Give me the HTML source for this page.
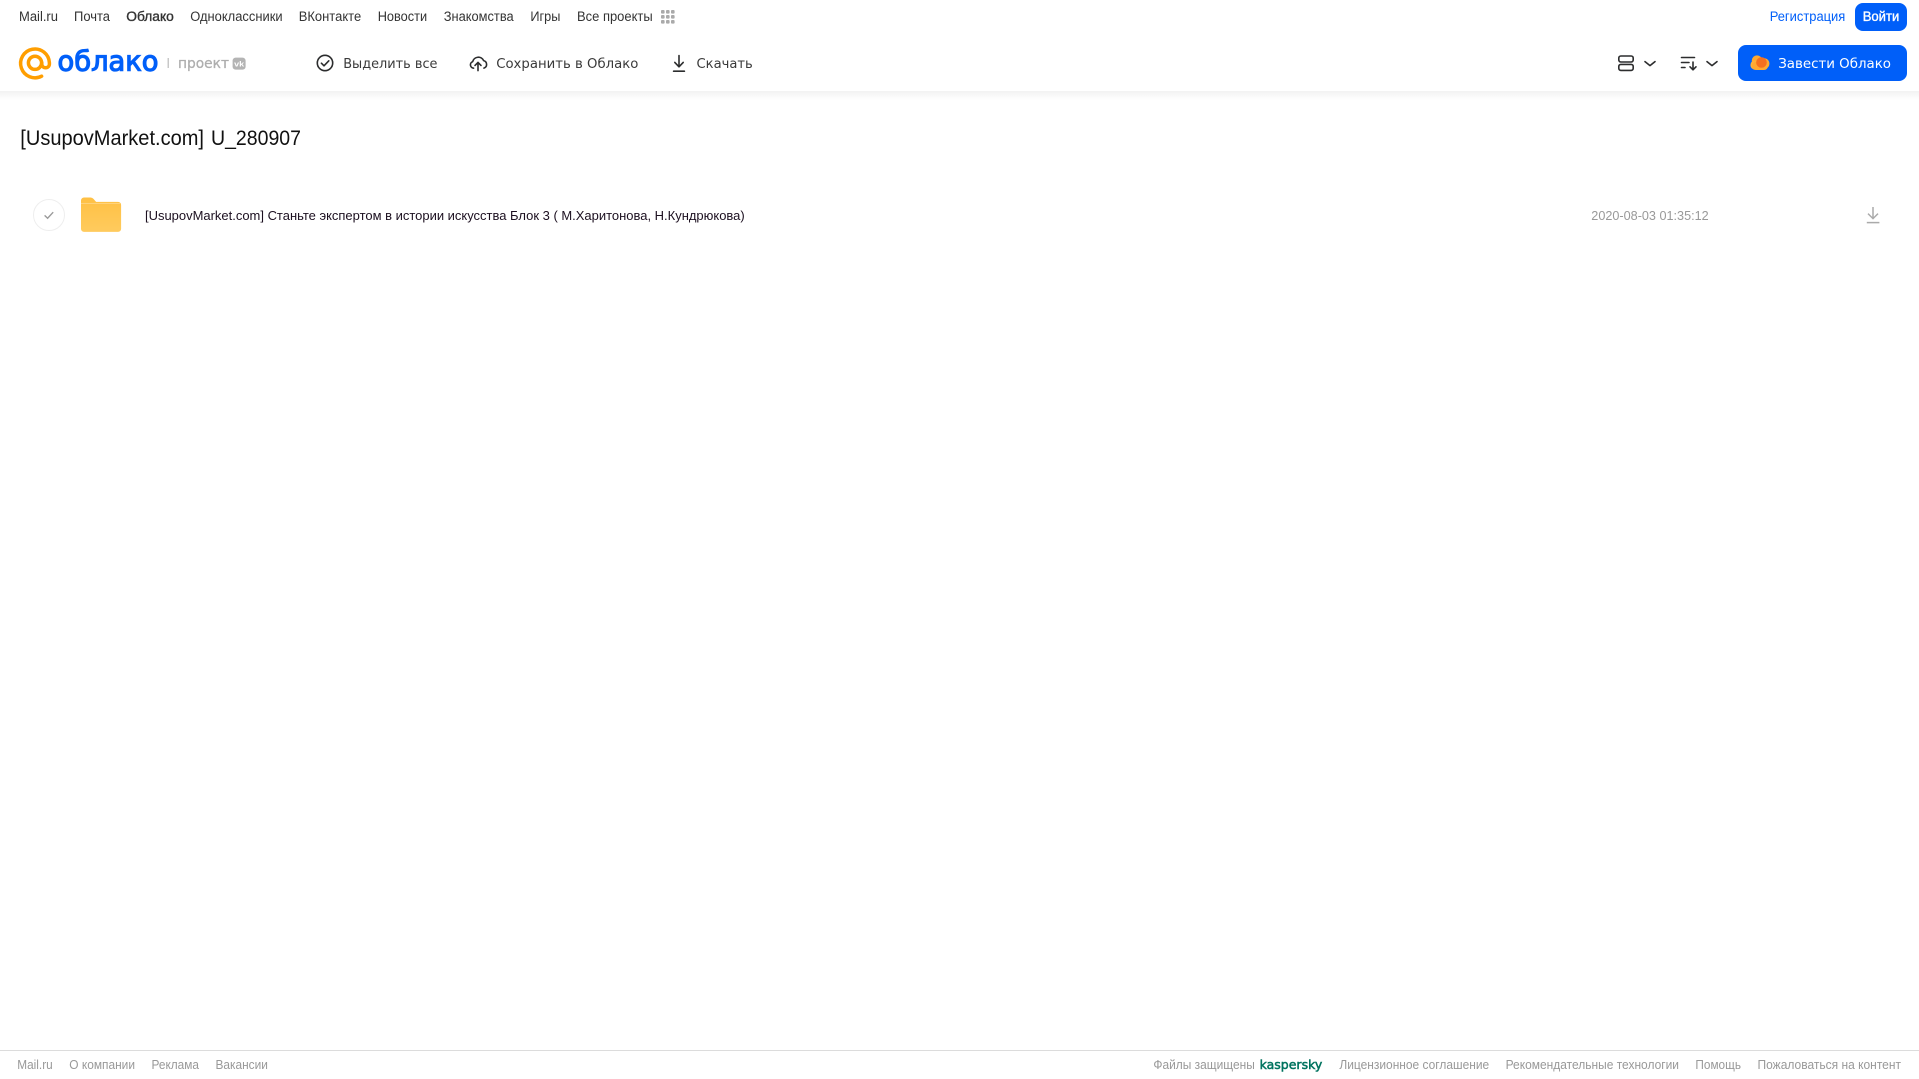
<!DOCTYPE html>
<html lang="ru"><head><meta charset="utf-8"><title>Облако</title>
<style>html,body{margin:0;padding:0;background:#fff;overflow:hidden}svg{display:block}text{font-family:"Liberation Sans",sans-serif;white-space:pre}.g{font-family:"DejaVu Sans",sans-serif}</style></head>
<body>
<svg xmlns="http://www.w3.org/2000/svg" width="1919" height="1079" viewBox="0 0 1919 1079">
<defs>
<linearGradient id="sh" x1="0" y1="0" x2="0" y2="1"><stop offset="0" stop-color="#f2f2f2"/><stop offset="1" stop-color="#fff"/></linearGradient>
<linearGradient id="fo" x1="0" y1="0" x2="0" y2="1"><stop offset="0" stop-color="#ffc043"/><stop offset="1" stop-color="#ffcb5e"/></linearGradient>
</defs>
<rect width="1919" height="1079" fill="#fff"/>
<rect y="91" width="1919" height="9" fill="url(#sh)"/>

<g font-size="13.5" fill="#333">
<text x="19" y="21" textLength="39" lengthAdjust="spacingAndGlyphs">Mail.ru</text>
<text x="74" y="21" textLength="36" lengthAdjust="spacingAndGlyphs">Почта</text>
<text x="126.3" y="21" textLength="47.5" lengthAdjust="spacingAndGlyphs" stroke="#333" stroke-width=".35">Облако</text>
<text x="190.2" y="21" textLength="92.4" lengthAdjust="spacingAndGlyphs">Одноклассники</text>
<text x="298.7" y="21" textLength="62.5" lengthAdjust="spacingAndGlyphs">ВКонтакте</text>
<text x="377.7" y="21" textLength="49.5" lengthAdjust="spacingAndGlyphs">Новости</text>
<text x="443.7" y="21" textLength="70" lengthAdjust="spacingAndGlyphs">Знакомства</text>
<text x="530.4" y="21" textLength="30" lengthAdjust="spacingAndGlyphs">Игры</text>
<text x="577" y="21" textLength="75.7" lengthAdjust="spacingAndGlyphs">Все проекты</text>
</g>
<g fill="#aaa">
<rect x="661" y="10" width="3.6" height="3.6" rx="1"/><rect x="666" y="10" width="3.6" height="3.6" rx="1"/><rect x="671" y="10" width="3.6" height="3.6" rx="1"/>
<rect x="661" y="15" width="3.6" height="3.6" rx="1"/><rect x="666" y="15" width="3.6" height="3.6" rx="1"/><rect x="671" y="15" width="3.6" height="3.6" rx="1"/>
<rect x="661" y="20" width="3.6" height="3.6" rx="1"/><rect x="666" y="20" width="3.6" height="3.6" rx="1"/><rect x="671" y="20" width="3.6" height="3.6" rx="1"/>
</g>

<text x="1769.7" y="21" font-size="13.5" fill="#005ff9" textLength="75.6" lengthAdjust="spacingAndGlyphs">Регистрация</text>
<rect x="1855" y="3" width="52" height="28" rx="8" fill="#005ff9"/>
<text x="1862.7" y="21" font-size="13.5" fill="#fff" stroke="#fff" stroke-width=".35" textLength="36.6" lengthAdjust="spacingAndGlyphs">Войти</text>

<!-- logo -->
<g fill="none" stroke="#ff9e00" stroke-width="3.5" stroke-linecap="round">
<path d="M41.6 76.2 A14.4 14.4 0 1 1 49.4 62.8 v1.2 a3.8 3.8 0 0 1 -7.6 0 V62.8"/>
<circle cx="35" cy="62.8" r="6.6"/>
</g>
<text class="g" x="57.5" y="70.6" font-size="28" font-weight="400" fill="#005ff9" stroke="#005ff9" stroke-width="1.2" textLength="101" lengthAdjust="spacingAndGlyphs">облако</text>
<rect x="167.6" y="58" width="1.2" height="10" fill="#bbb"/>
<text class="g" x="178" y="67.8" font-size="14.5" fill="#aeaeae" stroke="#aeaeae" stroke-width=".3" textLength="51" lengthAdjust="spacingAndGlyphs">проект</text>
<rect x="232.6" y="57.6" width="13" height="12" rx="3" fill="#b4b4b4"/>
<text x="234.2" y="66.6" font-size="7.5" font-weight="700" fill="#fff" textLength="10" lengthAdjust="spacingAndGlyphs">vk</text>

<!-- toolbar -->
<g class="g" font-size="13.5" fill="#3a3a3a">
<text class="g" x="343.2" y="67.8" textLength="94.3" lengthAdjust="spacingAndGlyphs">Выделить все</text>
<text class="g" x="496.2" y="67.8" textLength="142.2" lengthAdjust="spacingAndGlyphs">Сохранить в Облако</text>
<text class="g" x="696.5" y="67.8" textLength="56.3" lengthAdjust="spacingAndGlyphs">Скачать</text>
</g>
<g fill="none" stroke="#2c2d2e" stroke-width="1.6" stroke-linecap="round" stroke-linejoin="round">
<circle cx="325" cy="63" r="7.7"/>
<path d="M321.4 63.2l2.6 2.6 4.8-5"/>
<path d="M473.6 68.2a3.4 3.4 0 0 1-.9-6.6 5.8 5.8 0 0 1 10.9-1 3.9 3.9 0 0 1 .3 7.5"/>
<path d="M478 70.6v-8M475 65.4l3-3 3 3"/>
<path d="M679 55.5v11M674.8 62.4l4.2 4.4 4.2-4.4"/>
<path d="M673.6 71.2h10.8"/>
<rect x="1618.8" y="56" width="14.4" height="6" rx="2"/>
<rect x="1618.8" y="64.4" width="14.4" height="6" rx="2"/>
<path d="M1645 61.6l5 4 5-4"/>
<path d="M1681.5 57.5h13M1681.5 62.5h7.5M1681.5 67.5h3.5"/>
<path d="M1693 62v7.6M1690 66.8l3 3 3-3"/>
<path d="M1707 61.6l5 4 5-4"/>
</g>

<rect x="1738" y="45" width="169" height="36" rx="8" fill="#005ff9"/>
<circle cx="1757" cy="60.6" r="5.2" fill="#ffa930"/>
<circle cx="1755" cy="65" r="4.6" fill="#ffb03a"/>
<circle cx="1764" cy="63.6" r="5.4" fill="#ffa930"/>
<rect x="1752" y="62" width="16" height="8" rx="4" fill="#ffa930"/>
<circle cx="1761.5" cy="62.5" r="5.3" fill="#f5701f"/>
<text class="g" x="1778.2" y="67.8" font-size="13.5" fill="#fff" textLength="112.8" lengthAdjust="spacingAndGlyphs">Завести Облако</text>

<!-- title -->
<text x="20.3" y="145" font-size="21.5" fill="#111" textLength="183.7" lengthAdjust="spacingAndGlyphs">[UsupovMarket.com]</text>
<text x="211" y="145" font-size="21.5" fill="#111" textLength="90" lengthAdjust="spacingAndGlyphs">U_280907</text>

<!-- row -->
<circle cx="49" cy="215" r="15.5" fill="#fff" stroke="#eee" stroke-width="1"/>
<path d="M44.6 215.4l3 2.8 5.6-6" fill="none" stroke="#9a9a9a" stroke-width="1.4"/>
<path d="M81 200.5a3 3 0 0 1 3-3h6.5a4 4 0 0 1 3 1.4l2.6 3h22a3 3 0 0 1 3 3v24a3 3 0 0 1-3 3H84a3 3 0 0 1-3-3z" fill="url(#fo)"/>
<rect x="81" y="203" width="40" height="1" fill="#ffd27a"/>
<text x="145" y="220" font-size="13.2" fill="#1c1020" textLength="599.7" lengthAdjust="spacingAndGlyphs">[UsupovMarket.com] Станьте экспертом в истории искусства Блок 3 ( М.Харитонова, Н.Кундрюкова)</text>
<text x="1591.3" y="220" font-size="12.5" fill="#999" textLength="117.4" lengthAdjust="spacingAndGlyphs">2020-08-03 01:35:12</text>
<g fill="none" stroke="#aaa" stroke-width="1.5">
<path d="M1873 207v11.5M1868 213.6l5 5 5-5"/>
<path d="M1866.8 222.6h12.6"/>
</g>

<!-- footer -->
<rect y="1050" width="1919" height="1" fill="#dcdcdc"/>
<g font-size="12.6" fill="#999">
<text x="17.3" y="1069" textLength="35.4" lengthAdjust="spacingAndGlyphs">Mail.ru</text>
<text x="69.3" y="1069" textLength="65.7" lengthAdjust="spacingAndGlyphs">О компании</text>
<text x="151.5" y="1069" textLength="47.5" lengthAdjust="spacingAndGlyphs">Реклама</text>
<text x="215.5" y="1069" textLength="52.4" lengthAdjust="spacingAndGlyphs">Вакансии</text>
<text x="1153.4" y="1069" textLength="101.4" lengthAdjust="spacingAndGlyphs">Файлы защищены</text>
<text x="1339.4" y="1069" textLength="149.8" lengthAdjust="spacingAndGlyphs">Лицензионное соглашение</text>
<text x="1505.6" y="1069" textLength="173.4" lengthAdjust="spacingAndGlyphs">Рекомендательные технологии</text>
<text x="1695.4" y="1069" textLength="45.6" lengthAdjust="spacingAndGlyphs">Помощь</text>
<text x="1757.5" y="1069" textLength="143.5" lengthAdjust="spacingAndGlyphs">Пожаловаться на контент</text>
</g>
<text class="g" x="1259.6" y="1069" font-size="12.5" fill="#00735f" stroke="#00735f" stroke-width=".5" textLength="62.7" lengthAdjust="spacingAndGlyphs">kaspersky</text>
</svg>
</body></html>
